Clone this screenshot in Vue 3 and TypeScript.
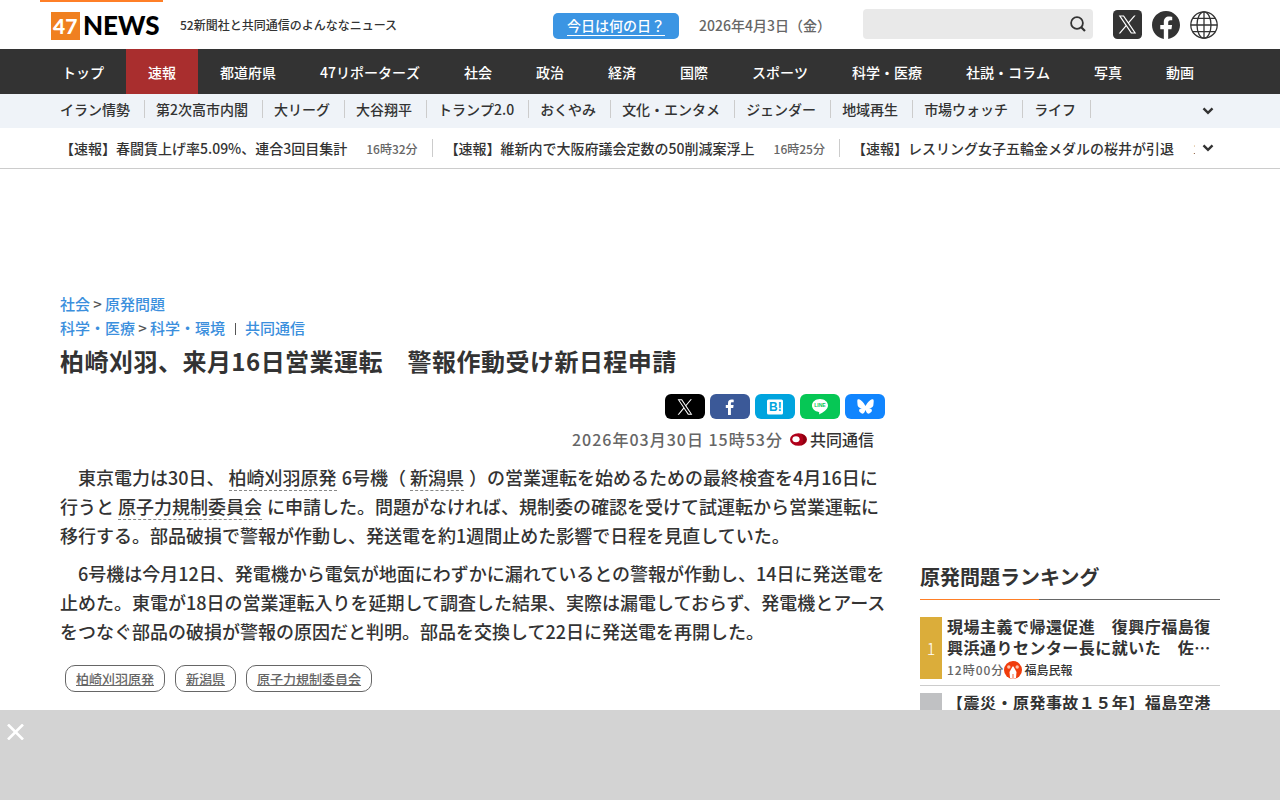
<script setup lang="ts">
import { ref } from 'vue'

interface Flash { title: string; time: string }
interface RankItem { rank: number; title: string; time: string; source: string }

const navItems: string[] = ['トップ', '速報', '都道府県', '47リポーターズ', '社会', '政治', '経済', '国際', 'スポーツ', '科学・医療', '社説・コラム', '写真', '動画']
const activeNav = '速報'
const topics: string[] = ['イラン情勢', '第2次高市内閣', '大リーグ', '大谷翔平', 'トランプ2.0', 'おくやみ', '文化・エンタメ', 'ジェンダー', '地域再生', '市場ウォッチ', 'ライフ']
const flashes: Flash[] = [
  { title: '【速報】春闘賃上げ率5.09%、連合3回目集計', time: '16時32分' },
  { title: '【速報】維新内で大阪府議会定数の50削減案浮上', time: '16時25分' },
  { title: '【速報】レスリング女子五輪金メダルの桜井が引退', time: '16時10分' },
]
const tags: string[] = ['柏崎刈羽原発', '新潟県', '原子力規制委員会']
const ranking: RankItem[] = [
  { rank: 1, title: '現場主義で帰還促進　復興庁福島復興浜通りセンター長に就いた　佐藤さん', time: '12時00分', source: '福島民報' },
  { rank: 2, title: '【震災・原発事故１５年】福島空港の役割を考える', time: '12時00分', source: '福島民報' },
]
const query = ref('')
const adOpen = ref(true)
</script>

<template>
  <div class="page" lang="ja">
    <header class="masthead">
      <a class="logo" href="#" aria-label="47NEWS">
        <svg width="112" height="30" viewBox="0 0 112 30" aria-hidden="true">
          <rect x="0" y="1" width="29" height="28" fill="#f08020" />
          <text x="2" y="23" class="logo-num">47</text>
          <text x="32" y="24" class="logo-word">NEWS</text>
        </svg>
      </a>
      <p class="tagline">52新聞社と共同通信のよんななニュース</p>
      <a class="today" href="#"><span>今日は何の日？</span></a>
      <time class="today-date">2026年4月3日（金）</time>
      <form class="search" role="search" @submit.prevent>
        <input v-model="query" type="search" aria-label="検索" />
        <button type="submit" aria-label="検索する">
          <svg width="16" height="16" viewBox="0 0 16 16" fill="none" stroke="#333" stroke-width="1.8">
            <circle cx="7" cy="7" r="5.9" /><path d="M11.2 11.2 15 15" stroke-width="2.2" />
          </svg>
        </button>
      </form>
      <nav class="social" aria-label="公式アカウント">
        <a href="#" aria-label="X">
          <svg width="29" height="29" viewBox="0 0 29 29">
            <rect width="29" height="29" rx="4.5" fill="#333" />
            <g transform="translate(5 5) scale(.79)"><path fill="#fff" d="M14.1 10.2 22.3.5h-2l-7.1 8.4L7.5.5H.9l8.6 12.8L.9 23.5h2l7.5-8.9 6 8.9H23zM11.4 13.4l-.9-1.3L3.6 2h3l5.6 8.2.9 1.3 7.3 10.6h-3z" /></g>
          </svg>
        </a>
        <a href="#" aria-label="Facebook">
          <svg width="28" height="28" viewBox="0 0 24 24"><path fill="#333" d="M24 12.07C24 5.41 18.63 0 12 0S0 5.4 0 12.07C0 18.1 4.39 23.1 10.13 24v-8.44H7.08v-3.49h3.04V9.41c0-3.02 1.8-4.7 4.54-4.7 1.31 0 2.68.24 2.68.24v2.97h-1.5c-1.5 0-1.96.93-1.96 1.89v2.26h3.32l-.53 3.5h-2.8V24C19.62 23.1 24 18.1 24 12.07" /></svg>
        </a>
        <a href="#" aria-label="言語">
          <svg width="28" height="28" viewBox="0 0 28 28" fill="none" stroke="#333" stroke-width="1.3">
            <circle cx="14" cy="14" r="13.2" /><ellipse cx="14" cy="14" rx="7" ry="13.2" />
            <path d="M14 .8v26.4M.8 14h26.4M2.7 7.3h22.6M2.7 20.7h22.6" />
          </svg>
        </a>
      </nav>
    </header>

    <nav class="global" aria-label="カテゴリー">
      <ul>
        <li v-for="n in navItems" :key="n"><a href="#" :class="{ active: n === activeNav }">{{ n }}</a></li>
      </ul>
    </nav>

    <nav class="topics" aria-label="トピック">
      <div class="row">
        <ul><li v-for="t in topics" :key="t"><a href="#">{{ t }}</a></li></ul>
        <button class="more" type="button" aria-label="トピックを開く">
          <svg width="12" height="8" viewBox="0 0 12 8" fill="none" stroke="#333" stroke-width="2.4"><path d="M1.5 1.3 6 5.8l4.5-4.5" /></svg>
        </button>
      </div>
    </nav>

    <section class="flash" aria-label="速報">
      <div class="row">
        <ul><li v-for="f in flashes" :key="f.title"><a href="#">{{ f.title }}</a><time>{{ f.time }}</time></li></ul>
        <button class="more" type="button" aria-label="速報を開く">
          <svg width="12" height="8" viewBox="0 0 12 8" fill="none" stroke="#333" stroke-width="2.4"><path d="M1.5 1.3 6 5.8l4.5-4.5" /></svg>
        </button>
      </div>
    </section>

    <div class="columns">
      <main>
        <nav class="crumbs" aria-label="パンくず">
          <div><a href="#">社会</a><span class="gt">&gt;</span><a href="#">原発問題</a></div>
          <div><a href="#">科学・医療</a><span class="gt">&gt;</span><a href="#">科学・環境</a><i class="bar"></i><a href="#">共同通信</a></div>
        </nav>
        <h1>柏崎刈羽、来月16日営業運転　警報作動受け新日程申請</h1>
        <div class="share">
          <a class="x" href="#" aria-label="Xで共有">
            <svg width="16" height="16" viewBox="0 0 24 24"><path fill="#fff" d="M14.1 10.2 22.3.5h-2l-7.1 8.4L7.5.5H.9l8.6 12.8L.9 23.5h2l7.5-8.9 6 8.9H23zM11.4 13.4l-.9-1.3L3.6 2h3l5.6 8.2.9 1.3 7.3 10.6h-3z" /></svg>
          </a>
          <a class="fb" href="#" aria-label="Facebookで共有">
            <svg width="10" height="16" viewBox="0 0 10 16"><path fill="#fff" d="M3 16V9H.8V6.1H3V4.3C3 1.7 4.3.5 6.6.5c1 0 1.7.1 2.1.2v2.5H7.2C6.1 3.2 5.9 3.7 5.9 4.600v1.500h2.700L8.200 9H5.900v7z" /></svg>
          </a>
          <a class="hatena" href="#" aria-label="はてなブックマークに追加">
            <svg width="16" height="16" viewBox="0 0 16 16"><rect width="16" height="15" y=".5" rx="1.5" fill="#fff" /><text x="2" y="12" class="hatena-text">B!</text></svg>
          </a>
          <a class="line" href="#" aria-label="LINEで送る">
            <svg width="18" height="17" viewBox="0 0 18 17"><path fill="#fff" d="M9 1C4.5 1 1 3.9 1 7.5c0 3.2 2.8 5.9 6.7 6.4.7.2.6.7.4 2 0 .4.2.5.6.3C11 14.9 17 11.7 17 7.5 17 3.9 13.5 1 9 1" /><text x="9" y="9" text-anchor="middle" class="line-text">LINE</text></svg>
          </a>
          <a class="bsky" href="#" aria-label="Blueskyで共有">
            <svg width="17" height="15" viewBox="0 0 600 530"><path fill="#fff" d="M136 44c66 50 138 151 164 205 26-54 98-155 164-205 48-36 126-64 126 25 0 18-10 149-16 170-21 74-96 92-163 81 117 20 147 86 82 152-122 125-176-32-189-72-3-7-4-11-4-8 0-3-1 1-4 8-13 40-67 197-189 72-65-66-35-132 82-152-67 11-142-7-163-81C20 218 10 87 10 69 10-20 88 8 136 44" /></svg>
          </a>
        </div>
        <p class="byline">
          <time>2026年03月30日 15時53分</time>
          <svg width="17" height="13" viewBox="0 0 17 13" aria-hidden="true"><ellipse cx="8.5" cy="6.5" rx="8.5" ry="6.3" fill="#b0001a" /><ellipse cx="6" cy="6.300" rx="3.600" ry="3" fill="#fff" /><path d="M11 .8c7 2 7 9 0 11.400 3-3 3-8 0-11.400" fill="#8c0010" /></svg>
          <span>共同通信</span>
        </p>
        <div class="body">
          <p>　東京電力は30日、 <a href="#">柏崎刈羽原発</a> 6号機（ <a href="#">新潟県</a> ）の営業運転を始めるための最終検査を4月16日に行うと <a href="#">原子力規制委員会</a> に申請した。問題がなければ、規制委の確認を受けて試運転から営業運転に移行する。部品破損で警報が作動し、発送電を約1週間止めた影響で日程を見直していた。</p>
          <p>　6号機は今月12日、発電機から電気が地面にわずかに漏れているとの警報が作動し、14日に発送電を止めた。東電が18日の営業運転入りを延期して調査した結果、実際は漏電しておらず、発電機とアースをつなぐ部品の破損が警報の原因だと判明。部品を交換して22日に発送電を再開した。</p>
        </div>
        <ul class="tags"><li v-for="t in tags" :key="t"><a href="#">{{ t }}</a></li></ul>
      </main>

      <aside>
        <h2>原発問題ランキング</h2>
        <ol>
          <li v-for="r in ranking" :key="r.rank">
            <span class="rank" :class="'rank-' + r.rank">{{ r.rank }}</span>
            <div class="entry">
              <a href="#">{{ r.title }}</a>
              <p>
                <time>{{ r.time }}</time>
                <svg width="18" height="18" viewBox="0 0 18 18" aria-hidden="true"><circle cx="9" cy="9" r="9" fill="#f03c0c" /><path fill="#fff" d="M8.5 5.5 5.500 11l.5 6q3 1.300 6 0l.5-6-3-5.500z" /><path fill="#f03c0c" d="M8.600 13h.8v4h-.8z" /><circle cx="4.800" cy="6" r="1.700" fill="#ffc0a8" /><circle cx="13.200" cy="6" r="1.700" fill="#ffc0a8" /></svg>
                <span>{{ r.source }}</span>
              </p>
            </div>
          </li>
        </ol>
      </aside>
    </div>

    <div v-if="adOpen" class="banner">
      <button type="button" aria-label="閉じる" @click="adOpen = false">
        <svg width="17" height="16" viewBox="0 0 17 16" fill="none" stroke="#fff" stroke-width="2.6"><path d="m1 .5 15 15M16 .5 1 15.500" /></svg>
      </button>
    </div>
  </div>
</template>

<style>
body { margin: 0; background: #fff; }
</style>

<style scoped>
.page {
  font-family: "Noto Sans CJK JP", sans-serif;
  font-weight: 500;
  font-size: 14px;
  line-height: 20px;
  color: #333;
}
.page * { box-sizing: border-box; }
ul, ol { list-style: none; margin: 0; padding: 0; }
p, h1, h2 { margin: 0; }
a { color: inherit; text-decoration: none; }
button, input { font: inherit; border: 0; padding: 0; background: none; }
svg { display: block; flex: none; }

.masthead {
  display: flex;
  align-items: center;
  max-width: 1200px;
  height: 49px;
  margin: 0 auto;
  padding-right: 22px;
}
.logo {
  align-self: stretch;
  display: flex;
  align-items: center;
  width: 123px;
  padding: 1px 0 0 11px;
  border-top: 2px solid #ff7f27;
}
.logo-num { font: 900 21px Lato, sans-serif; fill: #fff; }
.logo-word { font: 900 26px Lato, sans-serif; fill: #000; }
.tagline { margin-left: 17px; font-size: 12px; white-space: nowrap; }
.today {
  margin-left: auto;
  height: 26px;
  padding: 2px 14px;
  margin-top: 3px;
  border-radius: 5px;
  background: #3b95e3;
  color: #fff;
  white-space: nowrap;
}
.today span { display: block; height: 21px; border-bottom: 1px solid #fff; }
.today-date { margin-left: 20px; width: 164px; color: #666; white-space: nowrap; }
.search {
  display: flex;
  align-items: center;
  width: 230px;
  height: 30px;
  margin-bottom: 1px;
  padding-right: 7px;
  border-radius: 4px;
  background: #e9e9e9;
}
.search input { flex: 1; min-width: 0; height: 30px; padding-left: 10px; outline: 0; }
.social { display: flex; align-items: center; gap: 10px; margin-left: 20px; }

.global, .topics, .flash, h1 { font-kerning: none; }
.global { background: #333; color: #fff; }
.global ul { display: flex; max-width: 1200px; margin: 0 auto; }
.global a { display: block; padding: 1px 22px 0; line-height: 44px; white-space: nowrap; }
.global .active { background: #a92e2e; }

.row { display: flex; align-items: center; max-width: 1160px; margin: 0 auto; }
.row ul { display: flex; flex: 1; min-width: 0; overflow: hidden; white-space: nowrap; }
.more { display: flex; justify-content: center; width: 25px; }
.topics { background: #eff3f8; }
.topics .row { height: 34px; }
.topics li { height: 18px; line-height: 18px; padding-right: 14px; margin-right: 11px; border-right: 1px solid #ccc; }
.topics ul { margin-top: -4px; }
.flash { border-bottom: 1px solid #ccc; }
.flash .row { height: 40px; }
.flash li { flex: none; display: flex; align-items: center; height: 18px; padding-right: 14px; margin-right: 12px; border-right: 1px solid #ccc; }
.flash time { margin: 2px 0 0 19px; font-size: 12px; color: #666; }

.columns { display: flex; gap: 34px; max-width: 1160px; margin: 0 auto; padding: 123px 0 100px; }
main { flex: 1; min-width: 0; }
.crumbs { font-size: 15px; line-height: 24px; }
.crumbs div { display: flex; align-items: center; }
.crumbs a { color: #3b8fdd; }
.gt { width: 15px; text-align: center; color: #555; }
.bar { width: 1px; height: 12px; margin: 2px 9px 0 10px; background: #555; }
h1 { margin-top: 3px; font-size: 24px; line-height: 36px; font-weight: 700; letter-spacing: 0.02em; }
.share { display: flex; justify-content: flex-end; gap: 5px; margin: 15px 1px 0 0; }
.share a { display: flex; align-items: center; justify-content: center; width: 40px; height: 25px; border-radius: 6px; }
.x { background: #000; }
.fb { background: #3b5998; }
.hatena { background: #00a4de; }
.line { background: #06c755; }
.bsky { background: #1185fe; }
.hatena-text { font: 900 12px "Liberation Sans", sans-serif; fill: #00a4de; }
.line-text { font: 700 5px "Liberation Sans", sans-serif; fill: #06c755; }
.byline { display: flex; align-items: center; justify-content: flex-end; margin: 8px 12px 0 0; font-size: 16px; line-height: 24px; }
.byline time { margin-right: 7px; color: #666; letter-spacing: 1px; }
.byline span { margin-left: 3px; }
.body { margin-top: 12px; font-size: 18px; line-height: 1.6; }
.body p { margin-bottom: 10px; }
.body a { margin-right: 1px; border-bottom: 1px dashed #888; }
.tags { display: flex; flex-wrap: wrap; gap: 10px; margin: 19px 0 0 5px; }
.tags a { display: block; padding: 0 10px; border: 1px solid #666; border-radius: 10px; font-size: 13px; line-height: 25px; color: #666; text-decoration: underline; }

aside { flex: none; width: 300px; padding-top: 270px; }
h2 {
  font-size: 20px;
  line-height: 30px;
  font-weight: 700;
  padding-bottom: 8px;
  background: linear-gradient(90deg, #ff7f27 119px, #666 119px) bottom / 100% 1px no-repeat;
}
aside ol { margin-top: 10px; }
aside li { display: flex; gap: 5px; padding: 7px 0 6px; border-bottom: 1px solid #ccc; }
.rank { flex: none; display: flex; align-items: center; justify-content: center; width: 22px; font-size: 16px; font-weight: 300; color: #fff; }
.rank-1 { background: #dbad3a; }
.rank-2 { background: #c0c1c3; }
.entry { min-width: 0; margin-top: -1px; }
.entry a {
  display: -webkit-box;
  -webkit-box-orient: vertical;
  -webkit-line-clamp: 2;
  overflow: hidden;
  font-size: 16px;
  line-height: 21px;
  font-weight: 700;
  letter-spacing: 0.03em;
}
.entry p { display: flex; align-items: center; height: 18px; margin-top: 3px; font-size: 12px; }
.entry time { color: #666; letter-spacing: 1px; }
.entry span { margin-left: 2px; }

.banner { position: fixed; left: 0; right: 0; bottom: 0; height: 90px; padding: 14px 7px; background: #d3d3d3; }
.banner button { display: block; cursor: pointer; }
</style>
